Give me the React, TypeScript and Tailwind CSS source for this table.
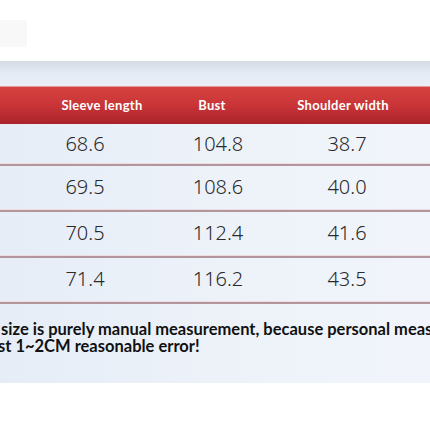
const rows = [
  ['68.6', '104.8', '38.7'],
  ['69.5', '108.6', '40.0'],
  ['70.5', '112.4', '41.6'],
  ['71.4', '116.2', '43.5'],
];

function Divider() {
  return (
    <div className="flex flex-col">
      <div className="h-px bg-[#ecdde0]" />
      <div className="h-[2px] bg-[#b3969d]" />
    </div>
  );
}

export default function App() {
  return (
    <div className="w-[430px] h-[430px] overflow-hidden bg-white flex flex-col">
      <div className="h-[61px] pt-[20px]">
        <div className="w-[27px] h-[27px] bg-[#f8f8f8]" />
      </div>

      <div className="h-[322px] flex flex-col bg-gradient-to-r from-[#e6edf7] via-[#edf2f9] to-[#f1f5fb]">
        <div className="h-[25px] bg-gradient-to-b from-[#d6dce6] via-[#e5ebf4] to-[#e9eef7]" />

        <div className="h-[38px] flex items-center bg-gradient-to-b from-[#d6423f] via-[#c93437] to-[#aa232a] border-t border-[#e59a98] font-['Lato',sans-serif] font-bold text-[13px] text-white tracking-[0.3px]">
          <div className="ml-[22px] w-[160px] text-center">Sleeve length</div>
          <div className="w-[60px] text-center">Bust</div>
          <div className="ml-[14px] w-[174px] text-center">Shoulder width</div>
        </div>

        {rows.map((r, i) => (
          <div key={i} className="flex flex-col">
            <div
              className={`${i === 0 ? 'h-[39px] pt-[1px]' : 'h-[43px] pb-[2px]'} flex items-center font-['Noto_Sans',sans-serif] font-light text-[20px] text-[#2a2a2a]`}
            >
              <div className="w-[170px] text-center">{r[0]}</div>
              <div className="w-[96px] text-center">{r[1]}</div>
              <div className="w-[162px] text-center">{r[2]}</div>
            </div>
            <Divider />
          </div>
        ))}

        <div className="pt-[17px] font-['Lato',sans-serif] font-bold text-[16.5px] leading-[17px] text-[#111] whitespace-nowrap overflow-hidden">
          <div className="ml-[1px]">size is purely manual measurement, because personal measurement</div>
          <div className="-ml-[2px]">st 1~2CM reasonable error!</div>
        </div>
      </div>
    </div>
  );
}
